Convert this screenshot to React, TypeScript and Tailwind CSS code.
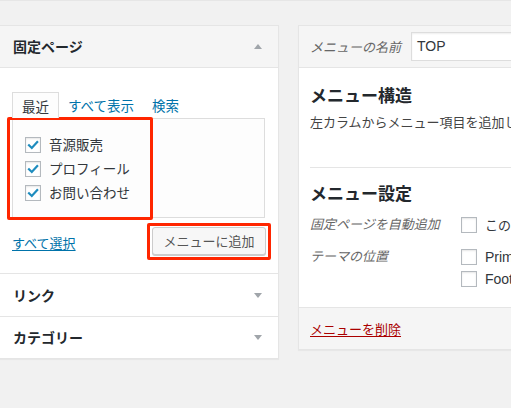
import React from "react";

const JP = { fontFamily: '"Noto Sans CJK JP", "Noto Sans", sans-serif' };
const EN = { fontFamily: '"Liberation Sans", "Noto Sans CJK JP", sans-serif' };

function Check({ checked }: { checked?: boolean }) {
  return (
    <div className="w-4 h-4 shrink-0 border border-[#b4b9be] bg-white shadow-[inset_0_1px_2px_rgba(0,0,0,0.1)] flex items-center justify-center">
      {checked && (
        <svg width="12" height="12" viewBox="0 0 12 12">
          <path d="M2 6.2 L4.8 9 L10.2 3" fill="none" stroke="#1e8cbe" strokeWidth="2.2" strokeLinecap="square" />
        </svg>
      )}
    </div>
  );
}

function TriUp() {
  return <div className="w-0 h-0 border-l-[4px] border-r-[4px] border-b-[5px] border-l-transparent border-r-transparent border-b-[#a0a5aa]" />;
}
function TriDown() {
  return <div className="w-0 h-0 border-l-[4px] border-r-[4px] border-t-[5px] border-l-transparent border-r-transparent border-t-[#a0a5aa]" />;
}

export default function App() {
  return (
    <div className="w-[511px] h-[408px] bg-[#f1f1f1] overflow-hidden relative" style={JP}>
      <div className="h-px bg-[#e6e6e6]" />
      <div className="flex items-start pt-6 gap-[19px]">
        {/* Left panel */}
        <div className="w-[279px] shrink-0 bg-white border border-l-0 border-[#e5e5e5] shadow-[0_1px_1px_rgba(0,0,0,0.04)]">
          <div className="h-[42px] bg-[#f5f5f5] border-b border-[#e5e5e5] flex items-center justify-between pl-[13px] pr-[16px]">
            <span className="text-[14px] font-bold text-[#23282d]">固定ページ</span>
            <TriUp />
          </div>
          <div className="pt-6 pl-3 pr-3 pb-[18px]">
            <div className="flex text-[13.5px] leading-none">
              <div className="h-[26px] px-[9px] border border-[#dddddd] border-b-0 bg-[#fdfdfd] -mb-px relative z-10 flex items-center pt-[2px] text-[#32373c]">
                最近
              </div>
              <div className="h-[26px] px-[9px] flex items-center pt-[2px] text-[#0073aa]">すべて表示</div>
              <div className="h-[26px] px-[9px] flex items-center pt-[2px] text-[#0073aa]">検索</div>
            </div>
            <div className="h-[100px] mr-px border border-[#dddddd] bg-[#fdfdfd] pt-[18px] pl-3 flex flex-col gap-2">
              {["音源販売", "プロフィール", "お問い合わせ"].map((t) => (
                <div key={t} className="flex items-center gap-2 h-4">
                  <Check checked />
                  <span className="text-[13.5px] text-[#32373c] leading-none">{t}</span>
                </div>
              ))}
            </div>
            <div className="flex items-center justify-between mt-[9px]">
              <span className="text-[13px] text-[#0073aa] underline underline-offset-2 pt-1">すべて選択</span>
              <div className="w-[114px] h-[28px] border border-[#cccccc] bg-[#f7f7f7] rounded-[3px] shadow-[0_1px_0_#cccccc] flex items-center justify-center text-[13px] text-[#555555]">
                メニューに追加
              </div>
            </div>
          </div>
          <div className="h-[43px] border-t border-[#e5e5e5] flex items-center justify-between pl-[13px] pr-[16px]">
            <span className="text-[14px] font-bold text-[#23282d]">リンク</span>
            <TriDown />
          </div>
          <div className="h-[42px] border-t border-[#e5e5e5] flex items-center justify-between pl-[13px] pr-[16px]">
            <span className="text-[14px] font-bold text-[#23282d]">カテゴリー</span>
            <TriDown />
          </div>
        </div>

        {/* Right panel */}
        <div className="w-[214px] shrink-0 bg-white border border-r-0 border-[#e5e5e5] shadow-[0_1px_1px_rgba(0,0,0,0.04)] overflow-hidden">
          <div className="h-[42px] bg-[#f5f5f5] border-b border-[#e5e5e5] flex items-center pl-[11px]">
            <span className="w-[101px] shrink-0 text-[13px] italic text-[#666666] whitespace-nowrap">メニューの名前</span>
            <div className="w-[120px] shrink-0 h-[29px] bg-white border border-[#dddddd] shadow-[inset_0_1px_2px_rgba(0,0,0,0.07)] flex items-center pl-[5px] text-[14px] text-[#32373c]" style={EN}>
              TOP
            </div>
          </div>
          <div className="pl-[11px]">
            <div className="h-[99px] pt-[15px]">
              <div className="h-6 leading-6 text-[17px] font-bold text-[#23282d] whitespace-nowrap">メニュー構造</div>
              <div className="mt-[5px] h-5 leading-5 text-[13px] text-[#444444] whitespace-nowrap">
                左カラムからメニュー項目を追加し
              </div>
            </div>
            <div className="border-t border-[#e5e5e5] h-[140px] pt-[13px]">
              <div className="h-6 leading-6 text-[17px] font-bold text-[#23282d] whitespace-nowrap">メニュー設定</div>
              <div className="flex mt-[10px]">
                <div className="w-[151px] shrink-0 h-[18px] leading-[18px] text-[13px] italic text-[#666666] whitespace-nowrap">固定ページを自動追加</div>
                <div className="flex items-center gap-2 mt-[2px] h-4 shrink-0">
                  <Check />
                  <span className="text-[13px] text-[#32373c] whitespace-nowrap">この</span>
                </div>
              </div>
              <div className="flex mt-[14px]">
                <div className="w-[151px] shrink-0 h-[18px] leading-[18px] text-[13px] italic text-[#666666] whitespace-nowrap">テーマの位置</div>
                <div className="flex flex-col gap-[6px] mt-[2px] shrink-0">
                  <div className="flex items-center gap-2 h-4">
                    <Check />
                    <span className="text-[14px] text-[#32373c] whitespace-nowrap" style={EN}>Prim</span>
                  </div>
                  <div className="flex items-center gap-2 h-4">
                    <Check />
                    <span className="text-[14px] text-[#32373c] whitespace-nowrap" style={EN}>Foot</span>
                  </div>
                </div>
              </div>
            </div>
          </div>
          <div className="h-[42px] bg-[#f5f5f5] border-t border-[#e5e5e5] flex items-center pl-[11px]">
            <span className="text-[13px] text-[#aa0000] underline underline-offset-2">メニューを削除</span>
          </div>
        </div>
      </div>

      {/* annotation boxes */}
      <div className="absolute left-[7px] top-[117px] w-[146px] h-[103px] border-[3px] border-[#ff2600] rounded-[2px]" />
      <div className="absolute left-[147px] top-[223px] w-[124px] h-[37px] border-[3px] border-[#ff2600] rounded-[2px]" />
    </div>
  );
}
